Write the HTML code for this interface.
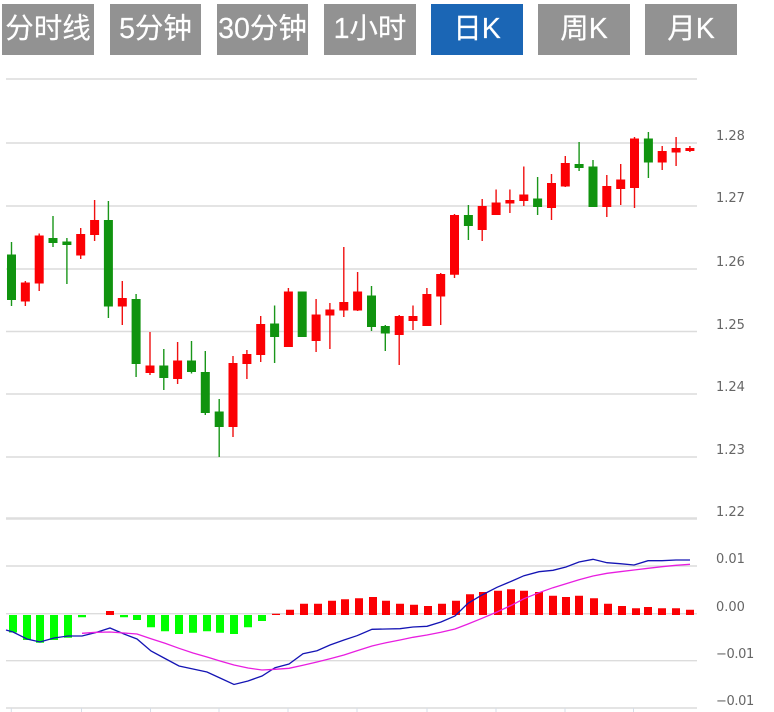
<!DOCTYPE html>
<html lang="zh">
<head>
<meta charset="utf-8">
<title>K线图</title>
<style>
html,body{margin:0;padding:0;background:#fff;width:774px;height:712px;overflow:hidden}
.b{position:absolute;top:4px;height:51px;line-height:51px;background:#929292;color:#fff;text-align:center;font-size:28.5px;font-family:"Liberation Sans","Noto Sans CJK SC",sans-serif;white-space:nowrap;-webkit-text-stroke:0.2px #fff}
.a{background:#1b66b5}
svg{position:absolute;left:0;top:0}
svg text{font-family:"DejaVu Sans",sans-serif;font-size:13px;fill:#666}
</style>
</head>
<body>
<div class="b" style="left:2px;width:92px">分时线</div>
<div class="b" style="left:110px;width:91px">5分钟</div>
<div class="b" style="left:217px;width:91px">30分钟</div>
<div class="b" style="left:324px;width:92px">1小时</div>
<div class="b a" style="left:431px;width:92px">日K</div>
<div class="b" style="left:538px;width:92px">周K</div>
<div class="b" style="left:645px;width:92px">月K</div>
<svg width="774" height="712" viewBox="0 0 774 712" xmlns="http://www.w3.org/2000/svg">
<path d="M6 79H697M6 143H697M6 206H697M6 269H697M6 331.5H697M6 394H697M6 457H697M6 566H697M6 613.7H697M6 660.7H697M6 708H697" stroke="#dcdcdc" stroke-width="1.4" fill="none"/>
<path d="M6 518.5H697" stroke="#dedede" stroke-width="2.4" fill="none"/>
<path d="M11.3 708v4M81.5 708v4M150.5 708v4M219 708v4M288 708v4M357 708v4M427 708v4M496 708v4M565 708v4M633.5 708v4" stroke="#d5dde8" stroke-width="1" fill="none"/>

<!-- red wicks -->
<path fill="none" stroke="#f01010" stroke-width="1.4" d="M25.35 281V306M39.2 233.5V291M80.7 228V259M94.6 200V241M122.3 281V325M150 332V375M177.6 342V384M233 356V437M246.9 350V379M260.7 316V362M288.4 288V347M316.1 299V352M329.9 303V349M343.8 247V317M357.6 272V311M399.2 315V365M413 305.5V330M426.9 288V326M440.7 273V325M454.5 214V278M482.2 199V241M496.1 189.5V215M509.9 189.5V213M523.8 166.5V206M551.5 174V220M565.3 156V187M606.8 175V217M620.7 164V205M634.5 137V208M662.2 146V170M676.1 137V166M689.9 146V152"/>
<!-- green wicks -->
<path fill="none" stroke="#1a961a" stroke-width="1.4" d="M11.5 242V306M53 216V247M66.9 238V284M108.4 201V318M136.1 294V377M163.8 349V390M191.5 341V373.5M205.3 351V415M219.2 399V457M274.6 305.5V363M302.2 291.5V337M371.5 286V331M385.3 325V351M468.4 205V240M537.6 177V215M579.1 142V171M593 160V207M648.4 132V178"/>
<!-- red bodies -->
<path fill="#fb0004" d="M20.85 282.5h9V301.5h-9zM34.7 235.5h9V283.5h-9zM76.2 234h9V255.5h-9zM90.1 220h9V235h-9zM117.8 298h9V306.5h-9zM145.5 365.5h9V373h-9zM173.1 360.5h9V379h-9zM228.5 363h9V427h-9zM242.4 354h9V364h-9zM256.2 324h9V355h-9zM283.9 291.5h9V347h-9zM311.6 314.5h9V341h-9zM325.4 309.5h9V315.5h-9zM339.3 302h9V310.5h-9zM353.1 291.5h9V310.5h-9zM394.7 316h9V335h-9zM408.5 316h9V321h-9zM422.4 294h9V326h-9zM436.2 274h9V296.5h-9zM450 215h9V274.7h-9zM477.7 206h9V230h-9zM491.6 202.5h9V215h-9zM505.4 200h9V203.5h-9zM519.3 194.5h9V201h-9zM547 183h9V208h-9zM560.8 163h9V186.5h-9zM602.3 186h9V207h-9zM616.2 179.5h9V189h-9zM630 138.5h9V188h-9zM657.7 151h9V162.5h-9zM671.6 148h9V152.5h-9zM685.4 148h9V151h-9z"/>
<!-- green bodies -->
<path fill="#10930f" d="M7 254.5h9V300h-9zM48.5 238h9V243h-9zM62.4 241.5h9V245h-9zM103.9 220h9V306.5h-9zM131.6 299h9V364h-9zM159.3 365.5h9V378h-9zM187 360.5h9V372h-9zM200.8 372h9V413h-9zM214.7 411.5h9V427h-9zM270.1 323.5h9V337h-9zM297.7 291.5h9V337h-9zM367 295.5h9V327h-9zM380.8 326h9V333.5h-9zM463.9 215h9V226h-9zM533.1 198.5h9V207h-9zM574.6 164h9V168h-9zM588.5 166.5h9V207h-9zM643.9 138.5h9V162.5h-9z"/>

<!-- MACD bars -->
<path fill="#00ff00" d="M9 615h8V632.5h-8zM23 615h8V640h-8zM36 615h8V642.7h-8zM50 615h8V640h-8zM64 615h8V637.7h-8zM78 615h8V617.3h-8zM120 615h8V617.3h-8zM133 615h8V620h-8zM147 615h8V627.3h-8zM161 615h8V631.3h-8zM175 615h8V634h-8zM189 615h8V632.7h-8zM203 615h8V631.3h-8zM216 615h8V632.7h-8zM230 615h8V634h-8zM244 615h8V627.3h-8zM258 615h8V621h-8z"/>
<path fill="#fb0004" d="M106 611h8V615h-8zM272 613.7h8V615h-8zM286 609.7h8V615h-8zM300 603.7h8V615h-8zM314 603.7h8V615h-8zM328 600.7h8V615h-8zM341 599.3h8V615h-8zM355 598.3h8V615h-8zM369 597h8V615h-8zM382 600.7h8V615h-8zM396 603.7h8V615h-8zM410 604.7h8V615h-8zM424 606h8V615h-8zM438 603.7h8V615h-8zM452 600.7h8V615h-8zM466 594.3h8V615h-8zM479 592h8V615h-8zM494 590.7h8V615h-8zM507 589.3h8V615h-8zM520 590.7h8V615h-8zM535 592h8V615h-8zM549 595.7h8V615h-8zM562 597h8V615h-8zM575 595.7h8V615h-8zM590 598.3h8V615h-8zM604 603.7h8V615h-8zM618 606h8V615h-8zM632 608.3h8V615h-8zM644 607h8V615h-8zM658 608.3h8V615h-8zM672 608.3h8V615h-8zM686 609.7h8V615h-8z"/>

<!-- MACD lines -->
<polyline fill="none" stroke="#1414b4" stroke-width="1.3" points="6,630 13,632 27,639 40,642 54,638 68,636 82,636 96,632.5 110,628 124,634 137,639 151,651 165,658.5 179,666 193,669 207,672 220,678 234,684.5 248,681 262,676 275,667.7 289,664 303,653.7 317,650.7 330,645 344,640 357,635.7 372,629.3 386,629 400,628.7 413,627 427,626.3 441,622 455,616 468,603.3 482,595 497,587.3 512,581 524,575.7 539,571.7 553,570.3 566,567 579,562 593,559.3 607,562.7 620,563.7 634,565 648,560.7 662,560.7 676,560 690,560"/>
<polyline fill="none" stroke="#e81ee0" stroke-width="1.3" points="82,633.3 96,632.3 110,632 124,633 137,634 151,638.7 165,643.3 179,648.3 193,653 207,657 220,661 234,665 248,668 262,670 275,669.3 289,668.3 303,665.3 317,662 330,658.7 344,655 357,650.7 372,646 386,642.7 400,640 413,637.3 427,635 441,632.3 455,629 468,624 482,618.3 497,612 512,605 524,598.7 539,592.7 553,587.7 566,583.7 579,579.7 593,576 607,573.3 620,571.7 634,570 648,568.3 662,566.7 676,565.3 690,564.3"/>

<!-- Axis labels -->
<text x="716" y="140">1.28</text>
<text x="716" y="202">1.27</text>
<text x="716" y="266">1.26</text>
<text x="716" y="329">1.25</text>
<text x="716" y="391">1.24</text>
<text x="716" y="454">1.23</text>
<text x="716" y="516">1.22</text>
<text x="716" y="563">0.01</text>
<text x="716" y="611">0.00</text>
<text x="716" y="658" letter-spacing="-0.4">−0.01</text>
<text x="716" y="705" letter-spacing="-0.4">−0.01</text>
</svg>
</body>
</html>
